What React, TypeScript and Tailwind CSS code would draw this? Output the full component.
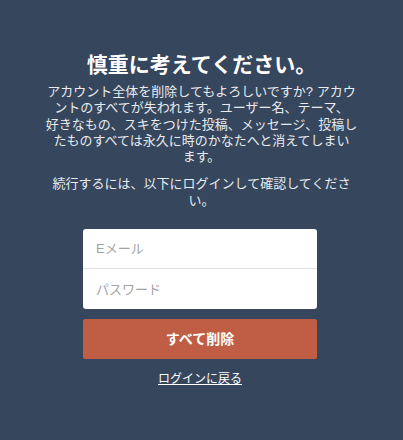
export default function App() {
  return (
    <div className="min-h-[440px] bg-[#36465d] text-white flex flex-col items-center pt-[51px]" style={{ fontFamily: '"Liberation Sans", "Noto Sans CJK JP", sans-serif' }}>
      <div className="w-[330px] text-center">
        <h1 className="text-[21px] font-bold leading-[28px]">慎重に考えてください。</h1>
        <p className="text-[13px] leading-[16.3px] mt-[5px] text-[#e8ebef]">
          アカウント全体を削除してもよろしいですか? アカウ<br />
          ントのすべてが失われます。ユーザー名、テーマ、<br />
          好きなもの、スキをつけた投稿、メッセージ、投稿し<br />
          たものすべては永久に時のかなたへと消えてしまい<br />
          ます。
        </p>
        <p className="text-[13px] leading-[16.3px] mt-[11px] text-[#e8ebef]">
          続行するには、以下にログインして確認してくださ<br />
          い。
        </p>
      </div>
      <form className="w-[234px] mt-[20px] mr-[3px] flex flex-col">
        <div className="bg-white rounded-[3px] flex flex-col">
          <input className="h-[40px] px-[13px] text-[13px] text-[#444] placeholder-[#a3a3a3] outline-none border-b border-[#e2e2e2] bg-transparent" placeholder="Eメール" />
          <input type="password" className="h-[40px] px-[13px] text-[13px] text-[#444] placeholder-[#a3a3a3] outline-none bg-transparent" placeholder="パスワード" />
        </div>
        <button type="button" className="mt-[10px] h-[40px] bg-[#bf5e44] rounded-[2px] text-white text-[14px] font-bold">
          すべて削除
        </button>
        <a href="#" className="mt-[12px] text-center text-[12px] leading-[16px] underline text-white">ログインに戻る</a>
      </form>
    </div>
  );
}
